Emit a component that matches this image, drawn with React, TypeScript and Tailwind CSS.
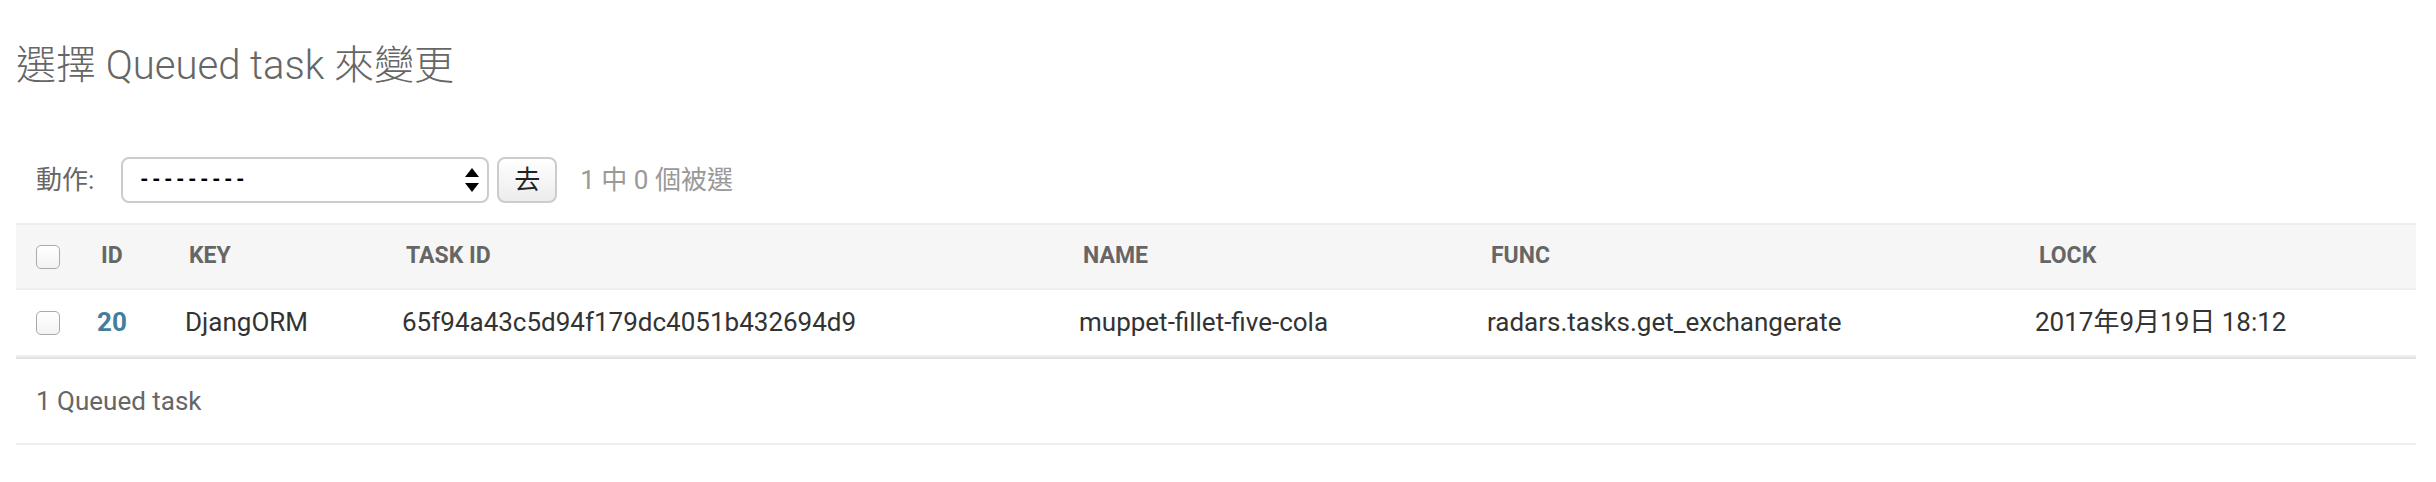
import React from 'react';

const COLS = 'grid grid-cols-[65px_88px_217px_677px_408px_548px_1fr]';

function Checkbox() {
  return (
    <div className="h-6 w-6 rounded-[5px] border border-[#aaa] bg-gradient-to-b from-white to-[#f3f3f3]" />
  );
}

const HEADERS = ['ID', 'Key', 'Task ID', 'Name', 'Func', 'Lock'];

export default function App() {
  return (
    <div className="min-h-screen bg-white pt-[42px] pl-4 pr-5 font-['Roboto','Noto_Sans_CJK_TC',sans-serif] text-[#333]">
      {/* Title */}
      <h1 className="mb-[47px] text-[40px] leading-[48px] font-light text-[#666]">
        選擇 Queued task 來變更
      </h1>

      {/* Actions */}
      <div className="flex items-center py-5 pl-5 text-[26px]">
        <label className="text-[#666]">動作:</label>
        <div className="relative ml-[27px] flex h-[46px] w-[368px] items-center rounded-[8px] border-2 border-[#ccc] bg-white pl-[15px]">
          <span className="font-['Liberation_Mono',monospace] text-[20px] font-bold leading-none text-black">---------</span>
          <svg className="absolute right-[8px] top-[9px]" width="14" height="25" viewBox="0 0 14 25">
            <path d="M7 0 L14 9 L0 9 Z" fill="#000" />
            <path d="M0 15 L14 15 L7 24 Z" fill="#000" />
          </svg>
        </div>
        <button className="ml-2 flex h-[46px] w-[60px] items-center justify-center rounded-[8px] border-2 border-[#ccc] bg-gradient-to-b from-white to-[#ececec] text-[26px] text-[#222]">
          去
        </button>
        <span className="ml-[23px] text-[#999]">1 中 0 個被選</span>
      </div>

      {/* Results */}
      <div className={`${COLS} h-[67px] items-center border-y-2 border-[#eee] bg-[#f6f6f6] text-[23px] font-bold uppercase text-[#666]`}>
        <div className="pl-5">
          <Checkbox />
        </div>
        {HEADERS.map((h) => (
          <div key={h} className="pl-5">
            {h}
          </div>
        ))}
      </div>
      <div className={`${COLS} h-[67px] items-center border-b-2 border-[#eee] text-[26px]`}>
        <div className="pl-5">
          <Checkbox />
        </div>
        <div className="pl-4 font-bold text-[#447e9b]">20</div>
        <div className="pl-4">DjangORM</div>
        <div className="pl-4">65f94a43c5d94f179dc4051b432694d9</div>
        <div className="pl-4">muppet-fillet-five-cola</div>
        <div className="pl-4">radars.tasks.get_exchangerate</div>
        <div className="pl-4">2017年9月19日 18:12</div>
      </div>

      {/* Paginator */}
      <p className="border-t-2 border-b-2 border-t-[#e2e2e2] border-b-[#eee] px-5 py-5 text-[26px] leading-[44px] text-[#666]">
        1 Queued task
      </p>
    </div>
  );
}
